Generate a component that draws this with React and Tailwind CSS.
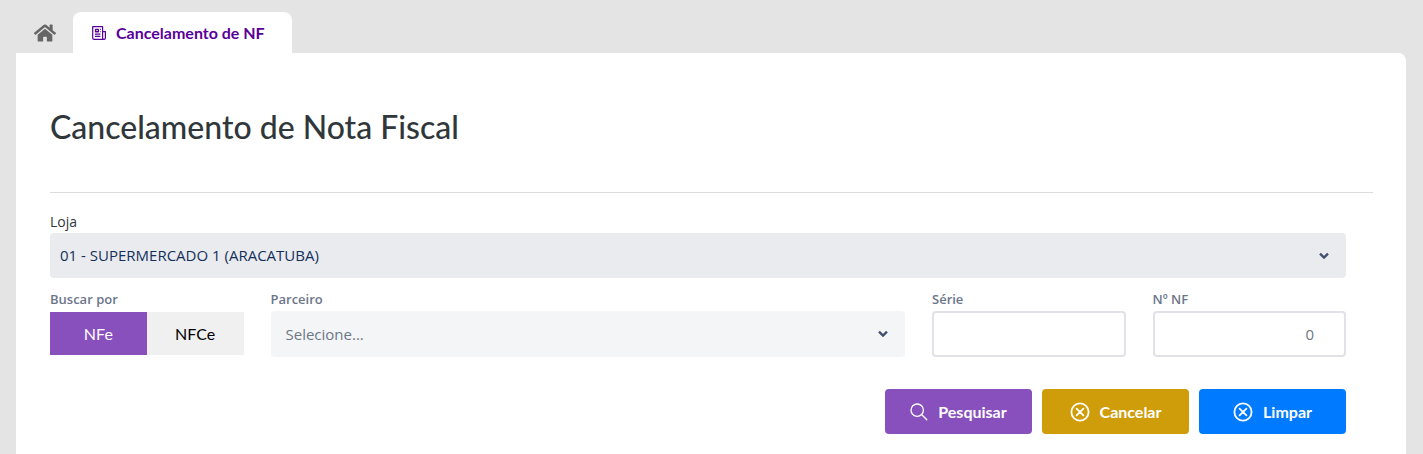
import { useState } from 'react';
import { FaHome } from 'react-icons/fa';

const STORES = ['01 - SUPERMERCADO 1 (ARACATUBA)'];
const DOC_TYPES = ['NFe', 'NFCe'];

function NewsIcon() {
  return (
    <svg viewBox="0 0 14 14" className="h-[14px] w-[14px]" fill="none" stroke="currentColor" strokeWidth="1.2" strokeLinejoin="round">
      <path d="M12 13.3H2.1A1.4 1.4 0 0 1 .7 11.9V.7h9.9v11.2a1.4 1.4 0 0 0 2.8 0V5.6h-2.8" />
      <path d="M3.6 3.4h2.8v2.4H3.6z" strokeWidth="1.4" />
      <path d="M3 8.1h5.4M3 10.4h5.4M8 3.4h.8M8 5.8h.8" strokeWidth="1.1" />
    </svg>
  );
}

function Chevron() {
  return (
    <svg viewBox="0 0 10 7" className="pointer-events-none absolute right-[17px] top-1/2 h-[7px] w-[10px] -translate-y-1/2" fill="none" stroke="#424f6e" strokeWidth="2.4">
      <path d="M1 1.2 5 5l4-3.8" />
    </svg>
  );
}

function SearchIcon() {
  return (
    <svg viewBox="0 0 18 18" className="h-[18px] w-[18px]" fill="none" stroke="currentColor" strokeWidth="1.3" strokeLinecap="round">
      <circle cx="7.2" cy="7.2" r="6.2" />
      <path d="m11.8 11.8 5 5" />
    </svg>
  );
}

function CloseCircleIcon() {
  return (
    <svg viewBox="0 0 20 20" className="h-5 w-5" fill="none" stroke="currentColor" strokeWidth="1.8" strokeLinecap="round">
      <circle cx="10" cy="10" r="8.6" />
      <path d="m6.6 6.6 6.8 6.8M13.4 6.6l-6.8 6.8" />
    </svg>
  );
}

function ActionButton({ className, icon, children }) {
  return (
    <button type="button" className={`flex h-[45px] w-[147px] items-center justify-center gap-[10px] rounded text-base font-bold text-white font-[Lato,sans-serif] ${className}`}>
      {icon}
      {children}
    </button>
  );
}

export default function App() {
  const [store, setStore] = useState(STORES[0]);
  const [docType, setDocType] = useState('NFe');
  const [partner, setPartner] = useState('');
  const [serie, setSerie] = useState('');
  const [number, setNumber] = useState('0');

  const labelClass = 'block h-5 text-[13px] leading-4 font-semibold text-[#6c7689]';
  const inputClass = 'h-[46px] w-full rounded border-2 border-[#e1e1e8] bg-white px-[30px] text-[15px] text-[#6d7785] outline-none focus:border-[#8850bd]';

  return (
    <div className="flex min-h-screen flex-col bg-[#e4e4e4] pl-4 pr-[17px] pt-3 font-['Open_Sans',sans-serif]">
      <nav className="flex items-stretch">
        <a href="#" aria-label="Início" className="flex w-[57px] items-center justify-center text-[#666]">
          <FaHome className="h-[22px] w-[22px]" />
        </a>
        <a href="#" className="flex h-[41px] w-[219px] items-center gap-[10px] rounded-t-lg bg-white pl-[19px] text-base font-bold text-[#590099] font-[Lato,sans-serif]">
          <NewsIcon />
          Cancelamento de NF
        </a>
      </nav>

      <main className="flex-1 rounded-tr-lg bg-white pl-[34px] pr-[33px] pb-5">
        <h1 className="border-b border-[#dcdcdc] pt-[54px] pb-[45px] text-[32px] leading-10 font-medium text-[#30373b] font-[Lato,sans-serif]">
          Cancelamento de Nota Fiscal
        </h1>

        <form className="pt-5 pr-[27px]" onSubmit={e => e.preventDefault()}>
          <label htmlFor="store" className="block h-5 text-[14px] leading-[18px] text-[#30373b]">Loja</label>
          <div className="relative">
            <select id="store" value={store} onChange={e => setStore(e.target.value)}
              className="h-[45px] w-full appearance-none rounded bg-[#eaebef] px-[10px] text-[15px] text-[#14305a] outline-none">
              {STORES.map(s => <option key={s}>{s}</option>)}
            </select>
            <Chevron />
          </div>

          <div className="grid grid-cols-12 gap-[27px] pt-[13px]">
            <div className="col-span-2" role="group" aria-labelledby="doc-type">
              <span id="doc-type" className={labelClass}>Buscar por</span>
              <div className="mt-px grid h-[43px] grid-cols-2 text-base font-[Lato,sans-serif]">
                {DOC_TYPES.map(type => (
                  <button key={type} type="button" aria-pressed={docType === type} onClick={() => setDocType(type)}
                    className={docType === type ? 'bg-[#8850bd] text-white' : 'bg-[#f0f0f0] text-black'}>
                    {type}
                  </button>
                ))}
              </div>
            </div>

            <div className="col-span-6">
              <label htmlFor="partner" className={labelClass}>Parceiro</label>
              <div className="relative">
                <select id="partner" value={partner} onChange={e => setPartner(e.target.value)}
                  className="h-[46px] w-full appearance-none rounded bg-[#f4f5f7] px-[15px] text-[15px] text-[#6d7785] outline-none">
                  <option value="">Selecione...</option>
                </select>
                <Chevron />
              </div>
            </div>

            <div className="col-span-2">
              <label htmlFor="serie" className={labelClass}>Série</label>
              <input id="serie" value={serie} onChange={e => setSerie(e.target.value)} className={inputClass} />
            </div>

            <div className="col-span-2">
              <label htmlFor="number" className={labelClass}>Nº NF</label>
              <input id="number" value={number} onChange={e => setNumber(e.target.value)} className={`${inputClass} text-right`} />
            </div>
          </div>

          <div className="flex justify-end gap-[10px] pt-8">
            <ActionButton className="bg-[#8850bd]" icon={<SearchIcon />}>Pesquisar</ActionButton>
            <ActionButton className="bg-[#cf9d0a]" icon={<CloseCircleIcon />}>Cancelar</ActionButton>
            <ActionButton className="bg-[#007bff]" icon={<CloseCircleIcon />}>Limpar</ActionButton>
          </div>
        </form>
      </main>
    </div>
  );
}
